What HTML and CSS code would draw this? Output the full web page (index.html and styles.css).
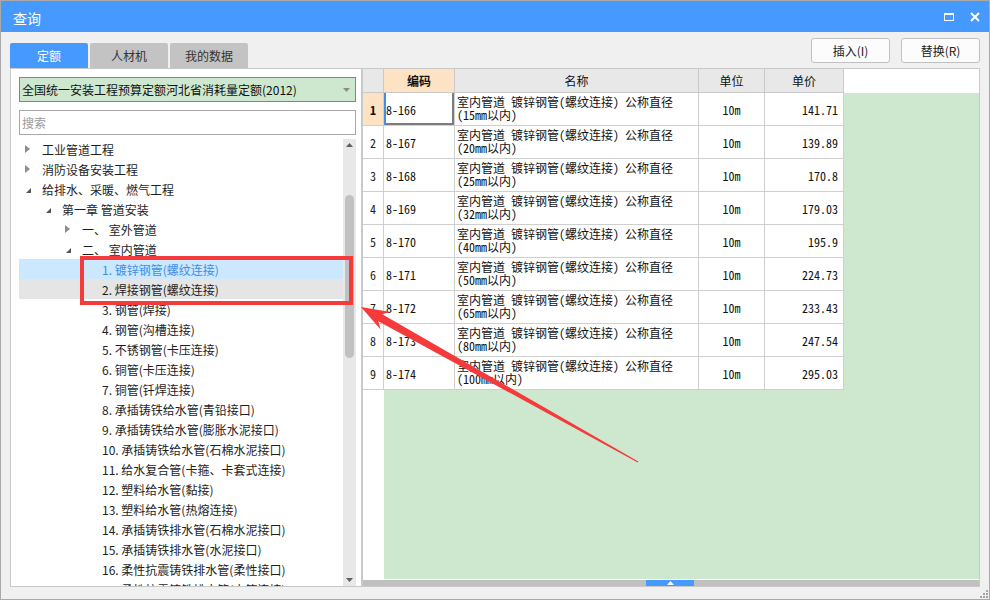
FILE: index.html
```html
<!DOCTYPE html>
<html lang="zh-CN">
<head>
<meta charset="utf-8">
<title>查询</title>
<link rel="stylesheet" href="styles.css">
</head>
<body>
<div class="window">
  <div class="titlebar">
    <span class="title">查询</span>
    <div class="win-ctrls">
      <svg class="ico" width="10" height="8" viewBox="0 0 10 8"><rect x="0.5" y="0.5" width="9" height="7" fill="none" stroke="#fff"/><rect x="0" y="0" width="10" height="2" fill="#fff"/></svg>
      <svg class="ico" width="10" height="10" viewBox="0 0 10 10"><path d="M1 1 L9 9 M9 1 L1 9" stroke="#fff" stroke-width="2"/></svg>
    </div>
  </div>

  <div class="toolbar">
    <div class="tabs">
      <div class="tab active">定额</div>
      <div class="tab">人材机</div>
      <div class="tab">我的数据</div>
    </div>
    <div class="actions">
      <button class="btn">插入(I)</button>
      <button class="btn">替换(R)</button>
    </div>
  </div>

  <div class="main">
    <div class="left">
      <div class="select">
        <span>全国统一安装工程预算定额河北省消耗量定额(2012)</span>
        <svg width="7" height="4" viewBox="0 0 7 4"><polygon points="0,0 7,0 3.5,4" fill="#8c8c8c"/></svg>
      </div>
      <div class="search">搜索</div>
      <div class="tree">
        <div class="tree-list">
          <div class="row l0"><span class="tg"><i class="col"></i></span>工业管道工程</div>
          <div class="row l0"><span class="tg"><i class="col"></i></span>消防设备安装工程</div>
          <div class="row l0"><span class="tg"><i class="exp"></i></span>给排水、采暖、燃气工程</div>
          <div class="row l1"><span class="tg"><i class="exp"></i></span>第一章 管道安装</div>
          <div class="row l2"><span class="tg"><i class="col"></i></span>一、 室外管道</div>
          <div class="row l2"><span class="tg"><i class="exp"></i></span>二、 室内管道</div>
          <div class="row l3 sel"><span class="tg"></span>1. 镀锌钢管(螺纹连接)</div>
          <div class="row l3 hov"><span class="tg"></span>2. 焊接钢管(螺纹连接)</div>
          <div class="row l3"><span class="tg"></span>3. 钢管(焊接)</div>
          <div class="row l3"><span class="tg"></span>4. 钢管(沟槽连接)</div>
          <div class="row l3"><span class="tg"></span>5. 不锈钢管(卡压连接)</div>
          <div class="row l3"><span class="tg"></span>6. 铜管(卡压连接)</div>
          <div class="row l3"><span class="tg"></span>7. 铜管(钎焊连接)</div>
          <div class="row l3"><span class="tg"></span>8. 承插铸铁给水管(青铅接口)</div>
          <div class="row l3"><span class="tg"></span>9. 承插铸铁给水管(膨胀水泥接口)</div>
          <div class="row l3"><span class="tg"></span>10. 承插铸铁给水管(石棉水泥接口)</div>
          <div class="row l3"><span class="tg"></span>11. 给水复合管(卡箍、卡套式连接)</div>
          <div class="row l3"><span class="tg"></span>12. 塑料给水管(黏接)</div>
          <div class="row l3"><span class="tg"></span>13. 塑料给水管(热熔连接)</div>
          <div class="row l3"><span class="tg"></span>14. 承插铸铁排水管(石棉水泥接口)</div>
          <div class="row l3"><span class="tg"></span>15. 承插铸铁排水管(水泥接口)</div>
          <div class="row l3"><span class="tg"></span>16. 柔性抗震铸铁排水管(柔性接口)</div>
          <div class="row l3"><span class="tg"></span>17. 柔性抗震铸铁排水管(卡箍连接)</div>
        </div>
        <div class="vscroll">
          <div class="vs-btn"><svg width="7" height="4" viewBox="0 0 7 4"><polygon points="0,4 7,4 3.5,0" fill="#606060"/></svg></div>
          <div class="vs-track"><div class="vs-thumb"></div></div>
          <div class="vs-btn"><svg width="7" height="4" viewBox="0 0 7 4"><polygon points="0,0 7,0 3.5,4" fill="#606060"/></svg></div>
        </div>
      </div>
    </div>

    <div class="right">
      <div class="grid">
        <div class="rownums">
          <div class="rn hd"></div>
          <div class="rn cur">1</div>
          <div class="rn">2</div>
          <div class="rn">3</div>
          <div class="rn">4</div>
          <div class="rn">5</div>
          <div class="rn">6</div>
          <div class="rn">7</div>
          <div class="rn">8</div>
          <div class="rn">9</div>
        </div>
        <div class="data">
          <div class="hrow">
            <div class="hc code-h">编码</div>
            <div class="hc">名称</div>
            <div class="hc">单位</div>
            <div class="hc">单价</div>
            <div class="hfill"></div>
          </div>
          <div class="drow"><div class="c code focus">8-166</div><div class="c name"><span class="ln">室内管道 镀锌钢管(螺纹连接) 公称直径</span><span class="ln">(15mm以内)</span></div><div class="c unit">10m</div><div class="c price">141.71</div></div>
          <div class="drow"><div class="c code">8-167</div><div class="c name"><span class="ln">室内管道 镀锌钢管(螺纹连接) 公称直径</span><span class="ln">(20mm以内)</span></div><div class="c unit">10m</div><div class="c price">139.89</div></div>
          <div class="drow"><div class="c code">8-168</div><div class="c name"><span class="ln">室内管道 镀锌钢管(螺纹连接) 公称直径</span><span class="ln">(25mm以内)</span></div><div class="c unit">10m</div><div class="c price">170.8</div></div>
          <div class="drow"><div class="c code">8-169</div><div class="c name"><span class="ln">室内管道 镀锌钢管(螺纹连接) 公称直径</span><span class="ln">(32mm以内)</span></div><div class="c unit">10m</div><div class="c price">179.03</div></div>
          <div class="drow"><div class="c code">8-170</div><div class="c name"><span class="ln">室内管道 镀锌钢管(螺纹连接) 公称直径</span><span class="ln">(40mm以内)</span></div><div class="c unit">10m</div><div class="c price">195.9</div></div>
          <div class="drow"><div class="c code">8-171</div><div class="c name"><span class="ln">室内管道 镀锌钢管(螺纹连接) 公称直径</span><span class="ln">(50mm以内)</span></div><div class="c unit">10m</div><div class="c price">224.73</div></div>
          <div class="drow"><div class="c code">8-172</div><div class="c name"><span class="ln">室内管道 镀锌钢管(螺纹连接) 公称直径</span><span class="ln">(65mm以内)</span></div><div class="c unit">10m</div><div class="c price">233.43</div></div>
          <div class="drow"><div class="c code">8-173</div><div class="c name"><span class="ln">室内管道 镀锌钢管(螺纹连接) 公称直径</span><span class="ln">(80mm以内)</span></div><div class="c unit">10m</div><div class="c price">247.54</div></div>
          <div class="drow"><div class="c code">8-174</div><div class="c name"><span class="ln">室内管道 镀锌钢管(螺纹连接) 公称直径</span><span class="ln">(100mm以内)</span></div><div class="c unit">10m</div><div class="c price">295.03</div></div>
        </div>
      </div>
      <div class="hscroll"><div class="hthumb"><svg width="7" height="4" viewBox="0 0 7 4"><polygon points="0,4 7,4 3.5,0" fill="#fff"/></svg></div></div>
    </div>
  </div>

  <svg class="annot" width="990" height="600" viewBox="0 0 990 600">
    <rect x="82" y="258" width="269" height="45" fill="none" stroke="#f43a3a" stroke-width="4"/>
    <polygon points="361,307 390.3,311.9 382.2,314.3 638.3,461.5 637.7,462.5 378.3,321.2 380.6,329.4" fill="#f43a3a"/>
  </svg>

  <svg class="grip" width="9" height="9" viewBox="0 0 9 9">
    <rect x="7" y="1" width="2" height="2" fill="#a6a6a6"/>
    <rect x="4" y="4" width="2" height="2" fill="#a6a6a6"/>
    <rect x="7" y="4" width="2" height="2" fill="#a6a6a6"/>
    <rect x="1" y="7" width="2" height="2" fill="#a6a6a6"/>
    <rect x="4" y="7" width="2" height="2" fill="#a6a6a6"/>
    <rect x="7" y="7" width="2" height="2" fill="#a6a6a6"/>
  </svg>
</div>
</body>
</html>
```

FILE: styles.css
```css
* { box-sizing: border-box; }
html, body { margin: 0; padding: 0; background: #fff; }
body {
  font-family: "Noto Sans CJK SC", "Noto Sans", sans-serif;
  font-size: 12px;
  color: #1e1e1e;
}

.window {
  position: relative;
  width: 990px;
  height: 600px;
  border: 1px solid #a9a9a9;
  background: #f0f0f0;
  display: flex;
  flex-direction: column;
  overflow: hidden;
}

/* title bar */
.titlebar {
  flex: none;
  height: 31px;
  background: #4599ff;
  color: #fff;
  display: flex;
  align-items: center;
  justify-content: space-between;
  padding: 0 9px 0 12px;
}
.title { font-size: 14px; line-height: 1; margin-top: 2px; }
.win-ctrls { display: flex; align-items: center; gap: 16px; }
.ico { display: block; }

/* toolbar */
.toolbar {
  flex: none;
  height: 36px;
  display: flex;
  justify-content: space-between;
  padding: 0 9px;
}
.tabs { display: flex; gap: 2px; align-self: flex-end; }
.tab {
  width: 78px;
  height: 25px;
  background: #c3c3c3;
  border-radius: 2px 2px 0 0;
  display: flex;
  align-items: center;
  justify-content: center;
  color: #333;
}
.tab.active { background: #4599ff; color: #fff; }
.actions { display: flex; gap: 11px; padding-top: 6px; }
.btn {
  width: 79px;
  height: 25px;
  border: 1px solid #c0c0c0;
  border-radius: 3px;
  background: #fcfcfc;
  font: 12px "Noto Sans CJK SC", sans-serif;
  color: #222;
  padding: 0;
}

/* main */
.main {
  flex: none;
  height: 519px;
  display: flex;
  padding: 0 9px;
}

.left {
  width: 352px;
  border: 1px solid #c9c9c9;
  background: #fff;
  padding: 8px 5px 0 8px;
  display: flex;
  flex-direction: column;
}
.select {
  flex: none;
  height: 25px;
  border: 1px solid #3f92f5;
  background: #cde8cf;
  display: flex;
  align-items: center;
  justify-content: space-between;
  padding: 0 5px 0 2px;
  color: #111;
}
.search {
  flex: none;
  margin-top: 8px;
  height: 25px;
  border: 1px solid #a9a9a9;
  color: #9a9a9a;
  padding-left: 2px;
  display: flex;
  align-items: center;
}
.tree {
  flex: 1;
  min-height: 0;
  margin-top: 4px;
  display: flex;
}
.tree-list { flex: 1; overflow: hidden; }
.row {
  height: 20px;
  display: flex;
  align-items: center;
  white-space: nowrap;
  color: #1e1e1e;
}
.row.l0 { padding-left: 4px; }
.row.l1 { padding-left: 24px; }
.row.l2 { padding-left: 44px; }
.row.l3 { padding-left: 64px; }
.row.sel { background: #cce8ff; color: #3d8ee6; }
.row.hov { background: #e5e5e5; }
.tg { flex: none; width: 19px; height: 20px; display: flex; align-items: center; padding-left: 2px; }
.tg .col {
  width: 0; height: 0;
  border-top: 4px solid transparent;
  border-bottom: 4px solid transparent;
  border-left: 5px solid #8d8d8d;
}
.tg .exp {
  width: 0; height: 0;
  margin-left: 1px;
  margin-top: 2px;
  border-left: 5px solid transparent;
  border-bottom: 5px solid #555;
}

.vscroll {
  flex: none;
  width: 13px;
  background: #e8e8e8;
  display: flex;
  flex-direction: column;
  align-items: center;
}
.vs-btn { flex: none; height: 12px; display: flex; align-items: center; justify-content: center; }
.vs-btn svg { display: block; }
.vs-track { flex: 1; padding-top: 44px; }
.vs-thumb { width: 9px; height: 163px; border-radius: 5px; background: #c1c1c1; }

/* right grid */
.right {
  width: 618px;
  border: 1px solid #c9c9c9;
  background: #fff;
  display: flex;
  flex-direction: column;
}
.grid { flex: 1; min-height: 0; display: flex; }
.rownums { flex: none; width: 21px; background: #fff; }
.rn {
  height: 33px;
  border-right: 1px solid #cfcfcf;
  border-bottom: 1px solid #cfcfcf;
  display: flex;
  align-items: center;
  justify-content: center;
  font-family: "Noto Sans Mono CJK SC", "Noto Sans CJK SC", monospace;
  color: #222;
}
.rn.hd { height: 24px; background: #e8e8e8; border-color: #c9c9c9; }
.rn.cur { background: #fde3c4; font-weight: bold; color: #111; }

.data { flex: 1; background: #cde8cf; }
.hrow, .drow {
  display: grid;
  grid-template-columns: 71px 244px 66px 79px 1fr;
}
.hrow { height: 24px; background: #fff; }
.hc {
  background: #e8e8e8;
  border-right: 1px solid #c9c9c9;
  border-bottom: 1px solid #c9c9c9;
  display: flex;
  align-items: center;
  justify-content: center;
  color: #111;
}
.hc.code-h { background: #fde3c4; font-weight: bold; }
.hfill { background: #fff; }
.drow { height: 33px; }
.c {
  background: #fff;
  border-right: 1px solid #cfcfcf;
  border-bottom: 1px solid #cfcfcf;
  font-family: "Noto Sans Mono CJK SC", "Noto Sans CJK SC", monospace;
  color: #111;
  white-space: nowrap;
  overflow: hidden;
}
.c.code { display: flex; align-items: center; padding-left: 2px; }
.c.code.focus { box-shadow: inset 2px 0 0 #3f90ea, inset -2px -2px 0 #7d7d7d; }
.c.name {
  display: flex;
  flex-direction: column;
  padding: 2px 0 0 2px;
}
.c.name .ln { display: block; height: 13px; line-height: 13px; font-size: 12px; }
.c.unit { display: flex; align-items: center; justify-content: center; }
.c.price { display: flex; align-items: center; justify-content: flex-end; padding-right: 5px; }

.hscroll {
  flex: none;
  height: 6px;
  margin-top: 1px;
  background: #c0c0c0;
  padding-left: 283px;
}
.hthumb {
  width: 48px;
  height: 6px;
  background: #4599ff;
  display: flex;
  align-items: center;
  justify-content: center;
}
.hthumb svg { display: block; }

/* annotation overlay (red box and arrow drawn over the screenshot) */
.annot {
  position: absolute;
  top: -1px;
  left: -1px;
  pointer-events: none;
}
.grip {
  position: absolute;
  right: 1px;
  bottom: 1px;
}
```
